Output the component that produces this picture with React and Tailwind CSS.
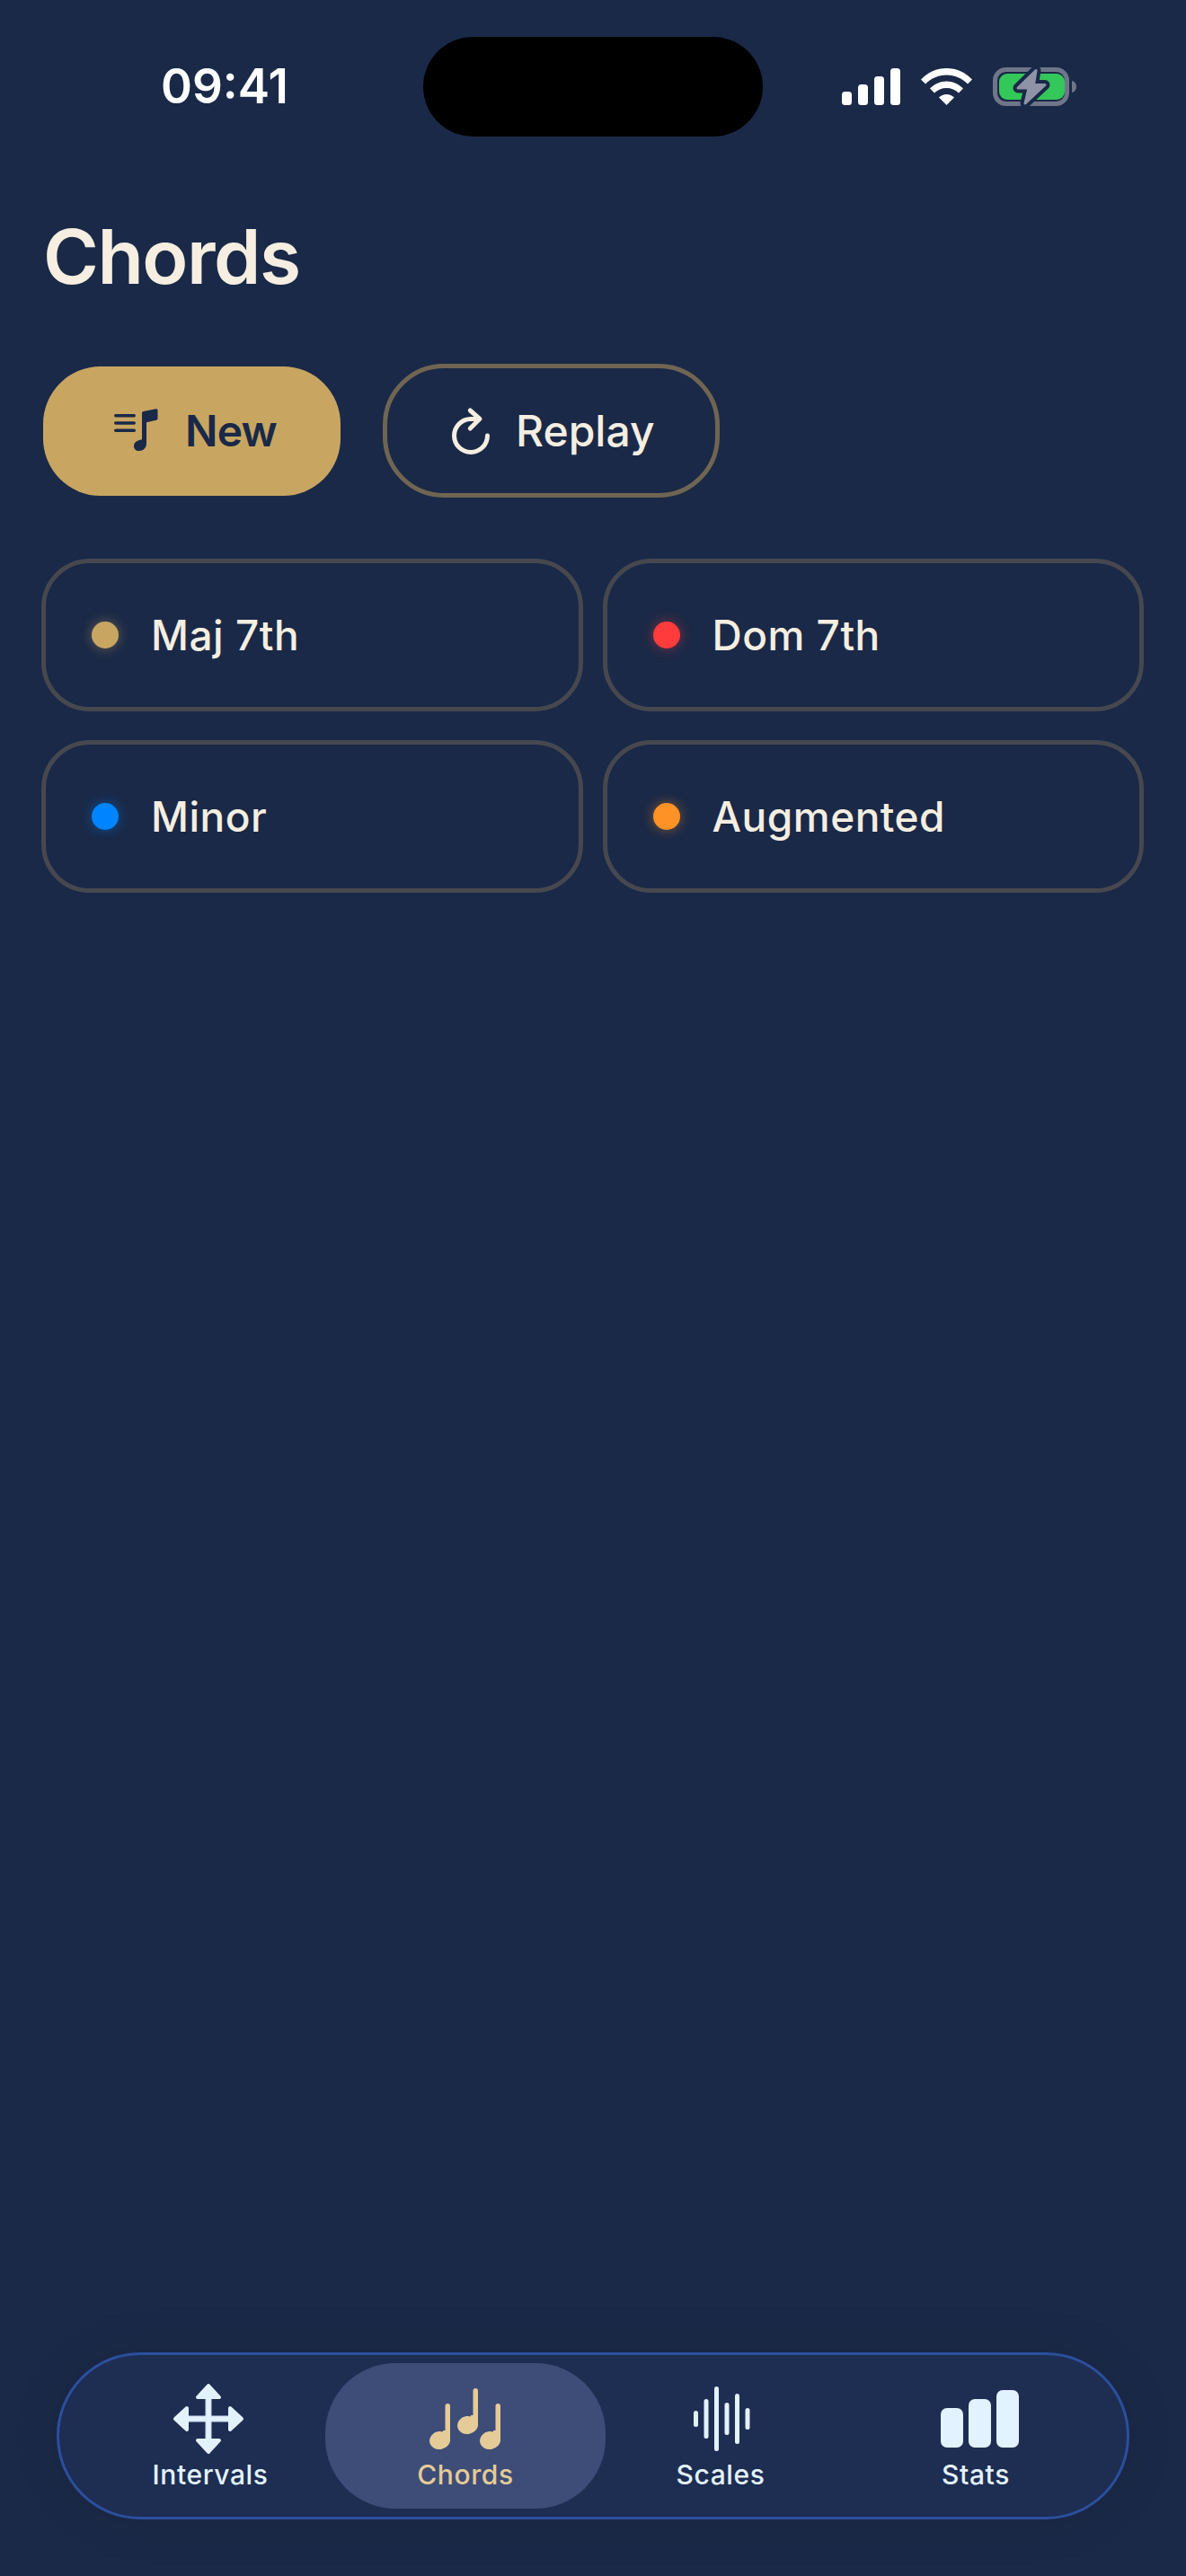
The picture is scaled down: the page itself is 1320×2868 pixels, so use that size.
const FONT = "font-['Inter','Liberation_Sans',sans-serif]";

const CHORD_TYPES = [
  { label: "Maj 7th", dot: "bg-[#c8a662] shadow-[0_0_14px_rgba(200,166,98,0.45)]" },
  { label: "Dom 7th", dot: "bg-[#ff3b3b] shadow-[0_0_14px_rgba(255,59,59,0.45)]" },
  { label: "Minor", dot: "bg-[#0084ff] shadow-[0_0_14px_rgba(0,132,255,0.45)]" },
  { label: "Augmented", dot: "bg-[#ff9226] shadow-[0_0_14px_rgba(255,146,38,0.45)]" },
];

function SignalIcon() {
  return (
    <svg width="65" height="41" viewBox="0 0 65 41" fill="#fff">
      <rect x="0" y="26" width="11" height="15" rx="3.5" />
      <rect x="18" y="18" width="11" height="23" rx="3.5" />
      <rect x="36" y="9" width="11" height="32" rx="3.5" />
      <rect x="54" y="0" width="11" height="41" rx="3.5" />
    </svg>
  );
}

function WifiIcon() {
  return (
    <svg width="57" height="41" viewBox="0 0 57 41" fill="#fff">
      <path d="M0 12.5C7.5 4.6 17.5 0 28.5 0S49.5 4.6 57 12.5L52 17.5C45.8 11.2 37.5 7.5 28.5 7.5S11.2 11.2 5 17.5Z" />
      <path d="M10 22.5C15 17.5 21.5 14.5 28.5 14.5S42 17.5 47 22.5L42 27.5C38.5 24 33.7 22 28.5 22S18.5 24 15 27.5Z" />
      <path d="M20 32.5C22.3 30.3 25.3 29 28.5 29S34.7 30.3 37 32.5L28.5 41Z" />
    </svg>
  );
}

function BatteryIcon() {
  const bolt = "M48 3.5 28 23H40L36 40 58 19.5H45.5Z";
  return (
    <svg width="93" height="43" viewBox="0 0 93 43" className="overflow-visible">
      <rect x="2.5" y="2.5" width="80" height="38" rx="12" fill="none" stroke="#6f7689" strokeWidth="5" />
      <rect x="7" y="7" width="73" height="29" rx="9" fill="#34c759" />
      <path d="M88 15c3 .5 5 3.2 5 6.5s-2 6-5 6.5z" fill="#6f7689" />
      <path d={bolt} fill="#1a2947" stroke="#1a2947" strokeWidth="11" strokeLinejoin="round" />
      <path d={bolt} fill="#8e94a6" stroke="#8e94a6" strokeWidth="3" strokeLinejoin="round" />
    </svg>
  );
}

function NewIcon() {
  return (
    <svg width="50" height="50" viewBox="0 0 50 50" fill="#1a2947" className="shrink-0">
      <rect x="0" y="6" width="24" height="3.4" rx="1.7" />
      <rect x="0" y="14.3" width="24" height="3.4" rx="1.7" />
      <rect x="0" y="22.6" width="24" height="3.4" rx="1.7" />
      <path d="M31 5c0-1 .6-1.8 1.6-2L46.5.3c1.3-.2 2 .4 2 1.6v8.8c0 1-.5 1.7-1.5 2L36 15.2V38.5c0 5-3.6 8.5-8.3 8.500-3.400 0-5.700-2.300-5.700-5.300 0-4 3.500-6.700 9-7.500z" />
    </svg>
  );
}

function ReplayIcon() {
  return (
    <svg width="50" height="56" viewBox="0 0 50 56" fill="none" stroke="#f5eee1" strokeWidth="5" strokeLinecap="round" strokeLinejoin="round" className="shrink-0">
      <path d="M33 14.5H24A18.5 18.5 0 1 0 42.5 33" />
      <path d="M23.3 5 34 14.3 23.3 25" />
    </svg>
  );
}

function IntervalsIcon() {
  return (
    <svg width="80" height="80" viewBox="0 0 80 80" className="-ml-[4px]">
      <path d="M36.5 14h7v52h-7zM14 36.5h52v7H14z" fill="#c9d9ee" />
      <g fill="#e3f2ff" stroke="#e3f2ff" strokeWidth="4" strokeLinejoin="round">
        <path d="M40 3 52 16H28z" />
        <path d="M40 77 52 64H28z" />
        <path d="M3 40 16 28v24z" />
        <path d="M77 40 64 28v24z" />
      </g>
      <path d="M15 37.5h50v5H15zM37.5 15h5v50h-5z" fill="#e3f2ff" />
    </svg>
  );
}

function Note({ x, y }) {
  return (
    <g transform={`translate(${x} ${y})`}>
      <rect x="17.5" y="0" width="5.5" height="42" rx="2.75" />
      <ellipse cx="11.5" cy="41" rx="11.5" ry="10" transform="rotate(-8 11.5 41)" />
      <rect x="15" y="30" width="8" height="12" />
    </g>
  );
}

function ChordsIcon() {
  return (
    <svg width="80" height="69" viewBox="0 0 80 69" fill="#e5cb97">
      <Note x={0} y={17} />
      <Note x={31} y={0} />
      <Note x={56} y={17} />
    </svg>
  );
}

function ScalesIcon() {
  const bars = [
    { x: 0, y: 27, h: 18 },
    { x: 11.5, y: 14, h: 44 },
    { x: 23, y: 0, h: 72 },
    { x: 34.5, y: 18, h: 36 },
    { x: 46, y: 8, h: 56 },
    { x: 57.5, y: 24, h: 24 },
  ];
  return (
    <svg width="63" height="72" viewBox="0 0 63 72" fill="#e3f2ff" className="ml-[2px]">
      {bars.map((b) => (
        <rect key={b.x} x={b.x} y={b.y} width="5" height={b.h} rx="2.5" />
      ))}
    </svg>
  );
}

function StatsIcon() {
  return (
    <svg width="87" height="64" viewBox="0 0 87 64" fill="#e3f2ff" className="ml-[9px]">
      <rect x="0" y="20" width="25" height="44" rx="7" />
      <rect x="31" y="10" width="25" height="54" rx="7" />
      <rect x="62" y="0" width="25" height="64" rx="7" />
    </svg>
  );
}

const TABS = [
  { label: "Intervals", icon: <IntervalsIcon /> },
  { label: "Chords", icon: <ChordsIcon />, active: true },
  { label: "Scales", icon: <ScalesIcon /> },
  { label: "Stats", icon: <StatsIcon /> },
];

export default function App() {
  return (
    <div className={`h-[2868px] w-[1320px] flex flex-col bg-[#1a2947] overflow-hidden ${FONT}`}>
      {/* Status bar */}
      <div className="flex items-center h-[111px] mt-[41px] pl-[179px] shrink-0">
        <div className="w-[292px] text-[53px] leading-none font-semibold text-white">09:41</div>
        <div className="w-[378px] h-[111px] rounded-[56px] bg-black" />
        <div className="flex items-center ml-[88px]">
          <SignalIcon />
          <div className="ml-[23px]"><WifiIcon /></div>
          <div className="ml-[23px]"><BatteryIcon /></div>
        </div>
      </div>

      <main className="flex-1">
        <h1 className="mt-[86px] pl-[48px] text-[84px] leading-[96px] font-semibold tracking-[-1.5px] text-[#f5eee1]">Chords</h1>

        {/* Actions */}
        <div className="flex items-center mt-[71px] pl-[48px] h-[149px]">
          <button className="flex items-center gap-[29px] w-[331px] h-[144px] pl-[79px] rounded-[64px] bg-[#c8a662] text-[48px] font-semibold tracking-[-0.8px] text-[#1a2947]">
            <NewIcon />
            <span>New</span>
          </button>
          <button className="flex items-center gap-[24px] w-[375px] h-[149px] ml-[47px] pl-[69px] rounded-[68px] border-[5px] border-[#6f6552] text-[48px] font-medium text-[#f5eee1]">
            <ReplayIcon />
            <span>Replay</span>
          </button>
        </div>

        {/* Chord types */}
        <div className="grid grid-cols-2 gap-x-[22px] gap-y-[32px] mt-[68px] pl-[46px] pr-[47px]">
          {CHORD_TYPES.map((c) => (
            <div key={c.label} className="flex items-center gap-[36px] h-[170px] pl-[51px] rounded-[54px] border-[5px] border-[#47484f]">
              <span className={`w-[30px] h-[30px] rounded-full ${c.dot}`} />
              <span className="text-[46px] font-medium tracking-[0.5px] text-[#f5eee1]">{c.label}</span>
            </div>
          ))}
        </div>
      </main>

      {/* Tab bar */}
      <nav className="grid grid-cols-4 items-center h-[186px] mx-[63px] mb-[63px] px-[26px] rounded-[93px] border-[3px] border-[#2b4f9f] bg-[#1e2d52] shadow-[0_0_60px_rgba(0,0,0,0.08)] shrink-0">
        {TABS.map((t) => (
          <div key={t.label} className="relative flex flex-col items-center justify-end h-[162px] pb-[20px]">
            {t.active && <div className="absolute inset-y-0 -inset-x-[14px] rounded-[78px] bg-[#3d4d78]" />}
            <div className="relative flex items-center justify-center h-[80px]">{t.icon}</div>
            <span className={`relative mt-[4px] text-[30px] leading-[36px] font-medium tracking-[0.6px] ${t.active ? "text-[#e5cb97]" : "text-[#e3f2ff]"}`}>{t.label}</span>
          </div>
        ))}
      </nav>
    </div>
  );
}
